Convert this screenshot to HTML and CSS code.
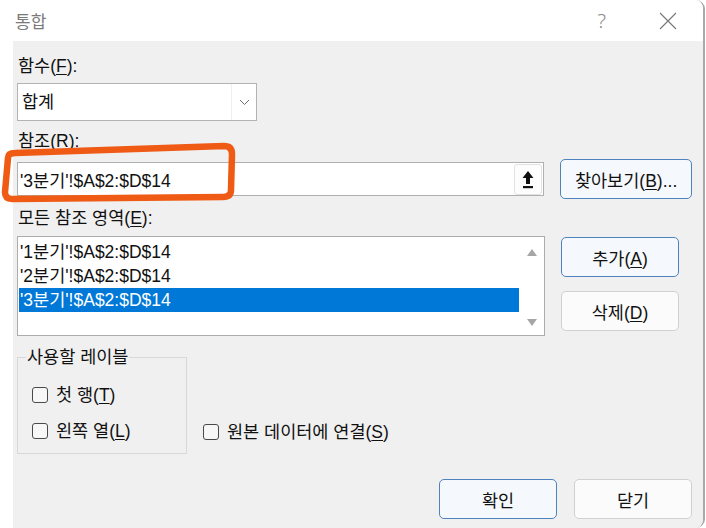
FILE: index.html
```html
<!DOCTYPE html>
<html lang="ko">
<head>
<meta charset="utf-8">
<link rel="stylesheet" href="styles.css">
</head>
<body>
<div class="window">
  <div class="titlebar">
    <span class="title">통합</span>
    <span class="help">?</span>
    <svg class="close" width="18" height="18" viewBox="0 0 18 18"><path d="M1 1 L17 17 M17 1 L1 17" stroke="#7a7a7a" stroke-width="1.2" fill="none"/></svg>
  </div>
  <div class="content">
    <div class="label">함수(<u>F</u>):</div>
    <div class="combo">
      <span class="combo-text">합계</span>
      <span class="combo-btn"><svg width="11" height="7" viewBox="0 0 11 7"><path d="M1 1 L5.5 5.5 L10 1" stroke="#6a6a6a" stroke-width="1" fill="none"/></svg></span>
    </div>
    <div class="label gap10">참조(<u>R</u>):</div>
    <div class="row ref-row">
      <div class="ref-input">
        <span class="ref-text">'3분기'!$A$2:$D$14</span>
        <span class="collapse-btn"><svg width="12" height="19" viewBox="0 0 12 19"><path d="M6 1 L11.5 8 L8 8 L8 14 L4 14 L4 8 L0.5 8 Z" fill="#111"/><rect x="1" y="16" width="10" height="2.2" fill="#111"/></svg></span>
      </div>
      <button class="btn accent browse">찾아보기(<u>B</u>)...</button>
    </div>
    <div class="label gap9">모든 참조 영역(<u>E</u>):</div>
    <div class="row list-row">
      <div class="listbox">
        <div class="items">
          <div class="item">'1분기'!$A$2:$D$14</div>
          <div class="item">'2분기'!$A$2:$D$14</div>
          <div class="item selected">'3분기'!$A$2:$D$14</div>
        </div>
        <div class="scrollbar">
          <svg width="10" height="7" viewBox="0 0 10 7"><path d="M5 0 L10 7 L0 7 Z" fill="#a6a6a6"/></svg>
          <svg width="10" height="7" viewBox="0 0 10 7"><path d="M0 0 L10 0 L5 7 Z" fill="#a6a6a6"/></svg>
        </div>
      </div>
      <div class="side-buttons">
        <button class="btn accent small">추가(<u>A</u>)</button>
        <button class="btn small">삭제(<u>D</u>)</button>
      </div>
    </div>
    <div class="row bottom-row">
      <fieldset class="group">
        <legend>사용할 레이블</legend>
        <label class="check"><span class="box"></span>첫 행(<u>T</u>)</label>
        <label class="check"><span class="box"></span>왼쪽 열(<u>L</u>)</label>
      </fieldset>
      <label class="check link"><span class="box"></span>원본 데이터에 연결(<u>S</u>)</label>
    </div>
    <div class="row footer">
      <button class="btn accent ok">확인</button>
      <button class="btn ok">닫기</button>
    </div>
  </div>
  <svg class="annot" width="240" height="70" viewBox="0 138 240 70"><path d="M8 158 Q8 153 15 153 L224 146 Q232 146 232 154 L231 190 Q231 197 223 197 L12 199 Q5 199 5 192 Z" stroke="#ef5a14" stroke-width="6.5" fill="none" stroke-linejoin="round"/></svg>
</div>
</body>
</html>
```

FILE: styles.css
```css
* { box-sizing: border-box; }
html, body { margin: 0; padding: 0; background: #ffffff; }
body {
  width: 706px;
  height: 528px;
  overflow: hidden;
  font-family: "Liberation Sans", "Noto Sans CJK KR", sans-serif;
  font-size: 17.5px;
  color: #111;
}
u { text-decoration-thickness: 1px; text-underline-offset: 2px; }
.window {
  position: relative;
  width: 705px;
  height: 528px;
  border-right: 2px solid #a9a9a9;
  border-radius: 0 9px 9px 0;
  overflow: hidden;
}
.titlebar {
  height: 41px;
  display: flex;
  align-items: center;
  padding-left: 15px;
  background: #fff;
}
.title { font-size: 17px; color: #7a7a7a; flex: 1; }
.help {
  font-family: "Noto Sans", sans-serif;
  font-weight: 300;
  font-size: 20px;
  color: #8a8a8a;
  margin-right: 53px;
}
.close { margin-right: 26px; }
.content {
  margin-left: 13px;
  background: #f0f0f0;
  height: 487px;
  padding: 15px 11px 0 4px;
}
.label { height: 20px; line-height: 20px; padding-left: 1px; }
.gap10 { margin-top: 10px; }
.gap9 { margin-top: 9px; }
.combo {
  margin-top: 7px;
  width: 240px;
  height: 38px;
  border: 1px solid #b3b3b3;
  background: #fff;
  display: flex;
  align-items: stretch;
}
.combo-text { flex: 1; padding-left: 4px; line-height: 36px; }
.combo-btn {
  width: 25px;
  display: flex;
  align-items: center;
  justify-content: center;
  border-left: 1px solid #f0f0f0;
}
.row { display: flex; }
.ref-row { margin-top: 8px; align-items: center; gap: 16px; }
.ref-input {
  width: 528px;
  height: 34px;
  border: 1px solid #b0b0b0;
  background: #fff;
  display: flex;
  align-items: center;
  padding: 0 1px 0 1px;
}
.ref-text { flex: 1; padding-left: 1px; }
.collapse-btn {
  width: 28px;
  height: 31px;
  border: 1px solid #e2e2e2;
  border-radius: 3px;
  background: #fdfdfd;
  display: flex;
  align-items: center;
  justify-content: center;
}
.btn {
  font-family: "Liberation Sans", "Noto Sans CJK KR", sans-serif;
  font-size: 17.5px;
  color: #111;
  height: 40px;
  border: 1px solid #d0d0d0;
  border-radius: 5px;
  background: #fbfbfb;
  padding: 0;
}
.btn.accent { border-color: #4f83bd; background: #f5f8fc; }
.browse { width: 132px; }
.list-row { margin-top: 8px; gap: 16px; }
.listbox {
  width: 528px;
  height: 100px;
  border: 1px solid #acacac;
  background: #fff;
  display: flex;
}
.items { flex: 1; padding: 3px 0 0 1px; }
.item { height: 24px; line-height: 24px; padding-left: 1px; }
.item.selected { background: #0078d7; color: #fff; }
.scrollbar {
  width: 25px;
  display: flex;
  flex-direction: column;
  justify-content: space-between;
  align-items: center;
  padding: 12px 0 9px;
}
.side-buttons { display: flex; flex-direction: column; gap: 14px; margin-top: 1px; }
.small { width: 118px; }
.bottom-row { margin-top: 11px; align-items: flex-end; }
.group {
  margin: 0;
  width: 170px;
  height: 107px;
  border: 1px solid #d8d8d8;
  padding: 17px 8px 0 14px;
  min-width: 0;
}
.group legend { padding: 0 1px; line-height: 20px; margin-left: -6px; }
.check { display: flex; align-items: center; height: 22px; line-height: 22px; }
.group .check + .check { margin-top: 14px; }
.box {
  width: 16px;
  height: 16px;
  border: 1px solid #4a4a4a;
  border-radius: 3px;
  background: #f7f7f7;
  margin-right: 8px;
}
.link { margin-left: 16px; margin-bottom: 11px; }
.footer { margin-top: 25px; justify-content: flex-end; gap: 17px; }
.ok { width: 118px; }
.annot { position: absolute; left: 0; top: 138px; }
```
